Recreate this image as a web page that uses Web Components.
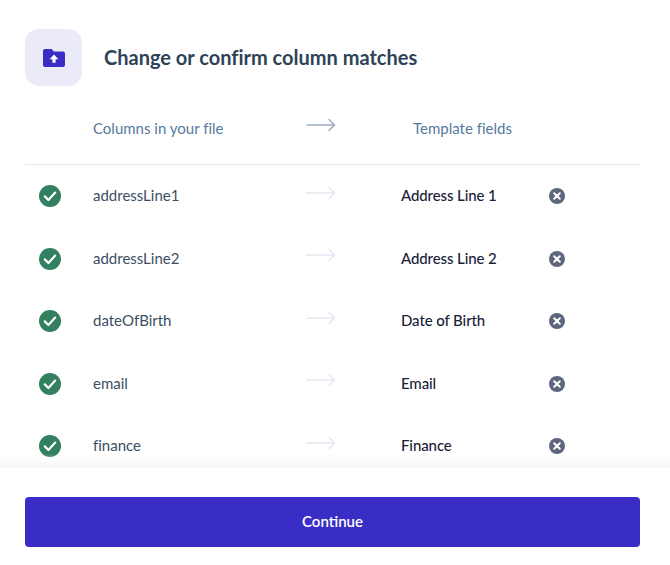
<!DOCTYPE html>
<html lang="en">
<head>
<meta charset="utf-8">
<title>Column matches</title>
<style>
  html, body {
    height: 100%;
    margin: 0;
  }

  body {
    background: #fff;
    font-family: "Lato", "Open Sans", sans-serif;
    font-variant-ligatures: none;
  }
</style>
</head>
<body>
<match-dialog>
  <match-row source="addressLine1" target="Address Line 1"></match-row>
  <match-row source="addressLine2" target="Address Line 2"></match-row>
  <match-row source="dateOfBirth" target="Date of Birth"></match-row>
  <match-row source="email" target="Email"></match-row>
  <match-row source="finance" target="Finance"></match-row>
</match-dialog>

<script>
const arrowIcon = (color) => `
  <svg width="30" height="14" viewBox="0 0 30 14" fill="none" stroke="${color}" stroke-width="1.6" stroke-linecap="round" stroke-linejoin="round">
    <path d="M1 7H27.5M23 1.5L28.5 7L23 12.5"/>
  </svg>`;

class MatchDialog extends HTMLElement {
  constructor() {
    super();

    this.attachShadow({ mode: "open" }).innerHTML = `
      <style>
        :host {
          display: flex;
          flex-direction: column;
          height: 565px;
          overflow: hidden;
        }

        header {
          display: flex;
          align-items: center;
          gap: 22px;
          padding: 29px 30px 0 25px;
        }

        .badge {
          display: flex;
          align-items: center;
          justify-content: center;
          width: 57px;
          height: 57px;
          border-radius: 14px;
          background: #ebeaf9;
        }

        h1 {
          margin: 0 0 2px;
          font-size: 20px;
          font-weight: 700;
          color: #2e4358;
        }

        .columns {
          display: grid;
          grid-template-columns: 68px 213px 107px 1fr;
          align-items: center;
          box-sizing: border-box;
          height: 79px;
          padding-top: 6px;
          margin: 0 30px 0 25px;
          border-bottom: 1.5px solid #e3e7ee;
          font-size: 15px;
          color: #557a9e;
        }

        .columns span:first-child {
          grid-column: 2;
        }

        .columns svg {
          display: block;
          margin-bottom: 7px;
        }

        .rows {
          flex: 1;
          min-height: 0;
          overflow: hidden;
        }

        footer {
          position: relative;
          padding: 29px 30px 18px 25px;
          background: #fff;
        }

        footer::before {
          content: "";
          position: absolute;
          left: 0;
          right: 0;
          top: -14px;
          height: 14px;
          background: linear-gradient(rgba(245, 245, 245, 0), #f7f7f7);
        }

        button {
          display: block;
          width: 100%;
          height: 50px;
          padding: 0 0 2px;
          border: 0;
          border-radius: 4px;
          background: #3a2dc6;
          color: #fff;
          font: 600 15px "Lato", "Open Sans", sans-serif;
        }
      </style>
      <header>
        <div class="badge">
          <svg width="22" height="18" viewBox="0 0 22 18">
            <path fill="#3a2dc6" d="M2 0H8.6L11 2.6H20A2 2 0 0 1 22 4.6V16A2 2 0 0 1 20 18H2A2 2 0 0 1 0 16V2A2 2 0 0 1 2 0Z"/>
            <path fill="#fff" d="M11 5.6L15.4 10.2H12.6V13.8H9.4V10.2H6.6Z"/>
          </svg>
        </div>
        <h1>Change or confirm column matches</h1>
      </header>
      <div class="columns">
        <span>Columns in your file</span>
        <span>${arrowIcon("#9fb0c3")}</span>
        <span>Template fields</span>
      </div>
      <div class="rows"><slot></slot></div>
      <footer><button>Continue</button></footer>
    `;
  }
}

class MatchRow extends HTMLElement {
  constructor() {
    super();

    this.attachShadow({ mode: "open" }).innerHTML = `
      <style>
        :host {
          display: grid;
          grid-template-columns: 68px 213px 95px 148px 1fr;
          align-items: center;
          height: 62.5px;
          margin: 0 30px 0 25px;
          font-size: 15px;
        }

        .check {
          margin-left: 14px;
          display: block;
        }

        .source {
          margin-bottom: 2px;
          color: #3c4e63;
        }

        .target {
          margin-bottom: 2px;
          color: #1a2238;
          font-weight: 500;
          letter-spacing: -0.1px;
        }

        .arrow svg {
          display: block;
          margin-bottom: 7px;
        }

        .remove {
          display: block;
          margin-left: -0.5px;
        }
      </style>
      <svg class="check" width="22" height="22" viewBox="0 0 22 22">
        <circle cx="11" cy="11" r="11" fill="#32805f"/>
        <path d="M5.8 11.4L9.4 15L16.2 7.6" fill="none" stroke="#fff" stroke-width="2.2" stroke-linecap="round" stroke-linejoin="round"/>
      </svg>
      <span class="source"></span>
      <span class="arrow">${arrowIcon("#e4e8ef")}</span>
      <span class="target"></span>
      <svg class="remove" width="16" height="16" viewBox="0 0 16 16">
        <circle cx="8" cy="8" r="8" fill="#5d667c"/>
        <path d="M5.2 5.2L10.8 10.8M10.8 5.2L5.2 10.8" stroke="#fff" stroke-width="2" stroke-linecap="round"/>
      </svg>
    `;

    this.shadowRoot.querySelector(".source").textContent = this.getAttribute("source");
    this.shadowRoot.querySelector(".target").textContent = this.getAttribute("target");
  }
}

window.customElements.define("match-dialog", MatchDialog);
window.customElements.define("match-row", MatchRow);
</script>
</body>
</html>
